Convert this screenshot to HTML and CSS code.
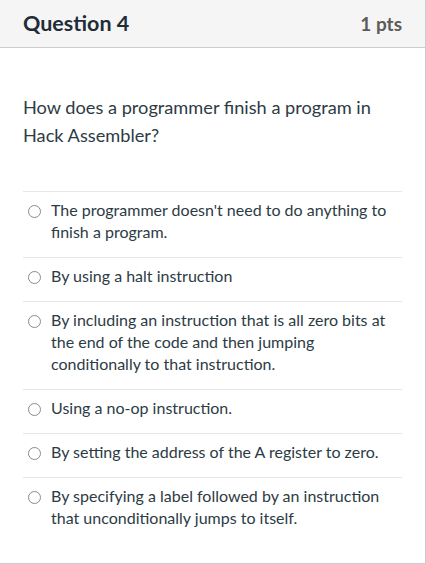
FILE: index.html
```html
<!DOCTYPE html>
<html>
<head>
<meta charset="utf-8">
<link rel="stylesheet" href="styles.css">
</head>
<body>
<div class="quiz">
  <div class="header">
    <h2 class="title">Question 4</h2>
    <span class="pts">1 pts</span>
  </div>
  <div class="body">
    <p class="question">How does a programmer finish a program in Hack Assembler?</p>
    <div class="answers">
      <label class="answer"><span class="radio"></span><span class="text">The programmer doesn't need to do anything to finish a program.</span></label>
      <label class="answer"><span class="radio"></span><span class="text">By using a halt instruction</span></label>
      <label class="answer"><span class="radio"></span><span class="text">By including an instruction that is all zero bits at the end of the code and then jumping conditionally to that instruction.</span></label>
      <label class="answer"><span class="radio"></span><span class="text">Using a no-op instruction.</span></label>
      <label class="answer"><span class="radio"></span><span class="text">By setting the address of the A register to zero.</span></label>
      <label class="answer"><span class="radio"></span><span class="text">By specifying a label followed by an instruction that unconditionally jumps to itself.</span></label>
    </div>
  </div>
</div>
</body>
</html>
```
FILE: styles.css
```css
html, body {
  margin: 0;
  padding: 0;
  background: #ffffff;
}
.quiz {
  box-sizing: border-box;
  width: 426px;
  height: 564px;
  border-right: 1px solid #c7cdd1;
  border-bottom: 1px solid #c7cdd1;
  font-family: Lato, "Open Sans", sans-serif;
  color: #2d3b45;
  background: #fff;
}
.header {
  box-sizing: border-box;
  height: 48px;
  background: #f5f5f5;
  border-bottom: 1px solid #c7cdd1;
  display: flex;
  align-items: center;
  justify-content: space-between;
  padding: 0 23px 1px 23px;
}
.title {
  margin: 0;
  font-size: 21.5px;
  font-weight: 700;
  color: #1f2d38;
}
.pts {
  font-size: 19px;
  font-weight: 700;
  color: #5b5b5b;
}
.body {
  padding: 0 23px;
}
.question {
  margin: 0;
  padding: 45px 0 42px 0;
  font-size: 18.2px;
  line-height: 28px;
}
.answers {
  display: flex;
  flex-direction: column;
}
.answer {
  display: flex;
  align-items: flex-start;
  border-top: 1px solid #e6e6e6;
  padding: 7px 0 14px 0;
  font-size: 16px;
  line-height: 22px;
}
.radio {
  box-sizing: border-box;
  flex: none;
  width: 13px;
  height: 13px;
  border: 1.5px solid #8a8a8a;
  border-radius: 50%;
  margin: 6px 10px 0 5px;
}
.text {
  flex: 1;
}
```
